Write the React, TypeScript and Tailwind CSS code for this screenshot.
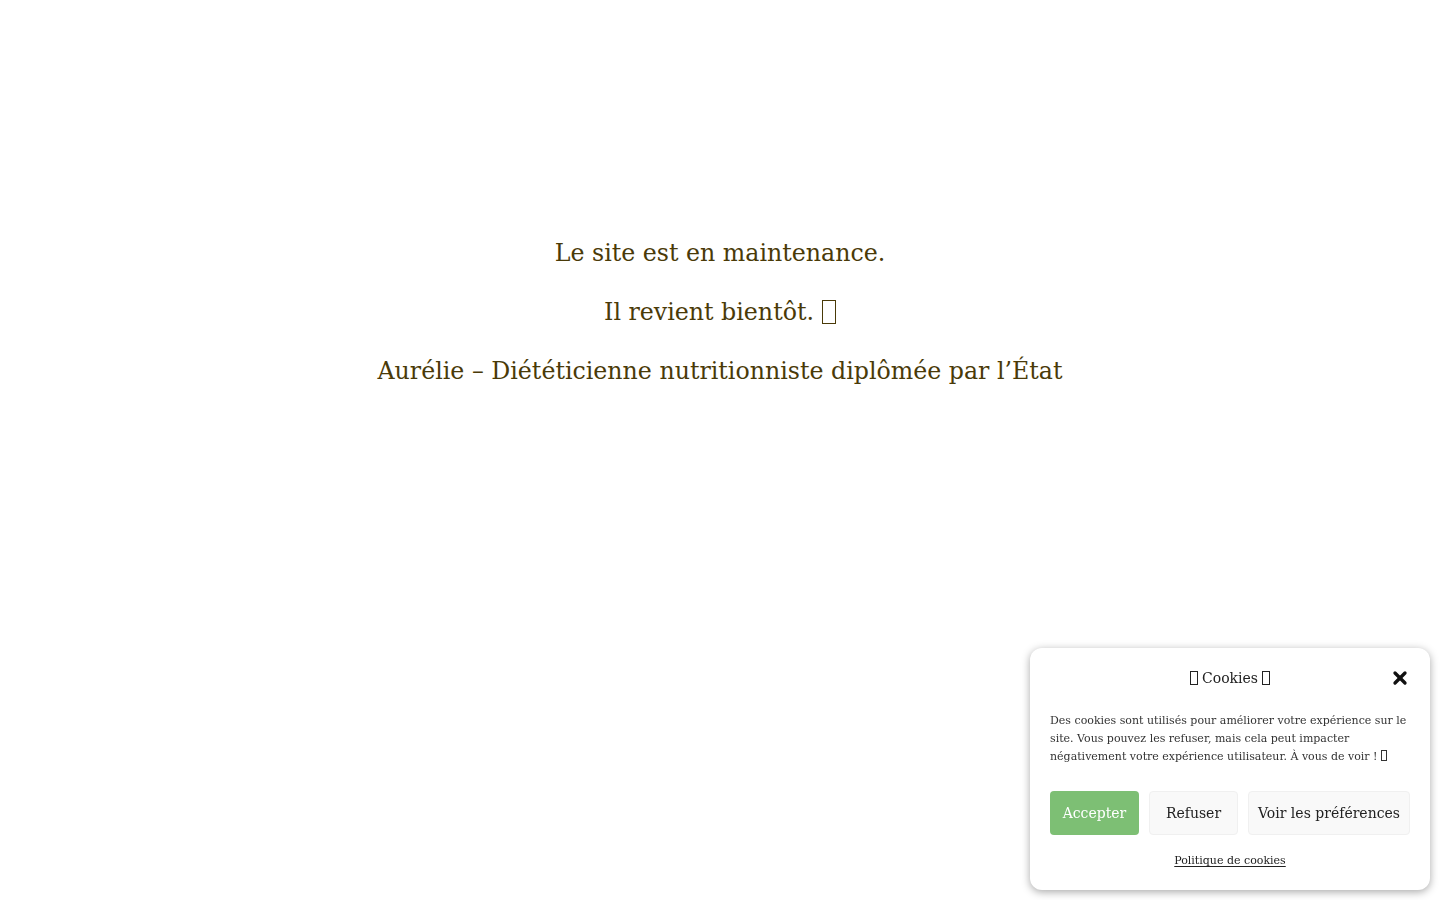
import { X } from "lucide-react";

const serif = { fontFamily: '"DejaVu Serif", "Liberation Serif", serif' };

// glyph box shown where the emoji has no font
function Tofu({ className }: { className: string }) {
  return <span className={`inline-block border border-current align-[-0.1em] ${className}`} />;
}

function CookieBanner() {
  return (
    <div
      className="fixed bottom-[10px] right-[10px] w-[400px] rounded-xl bg-white px-5 pb-[19px] pt-[18px] text-[#222] shadow-[0_2px_8px_rgba(0,0,0,0.35)]"
      style={serif}
    >
      <div className="relative flex h-[24px] items-center justify-center">
        <span className="flex items-center gap-[4px] text-[14px]">
          <Tofu className="h-[14px] w-[8px]" />
          Cookies
          <Tofu className="h-[14px] w-[8px]" />
        </span>
        <X size={20} strokeWidth={4} className="absolute right-[0px] top-[2px] text-[#111]" />
      </div>
      <p className="mt-[22px] text-[11px] leading-[18px] text-[#333]">
        Des cookies sont utilisés pour améliorer votre expérience sur le site. Vous pouvez les refuser, mais cela peut
        impacter négativement votre expérience utilisateur. À vous de voir !{" "}
        <Tofu className="h-[11px] w-[6px]" />
      </p>
      <div className="mt-[25px] flex gap-[10px]">
        <button type="button" className="h-[44px] w-[89px] rounded-[4px] bg-[#7dbf74] text-[14px] text-white">
          Accepter
        </button>
        <button
          type="button"
          className="h-[44px] w-[89px] rounded-[4px] border border-[#f0f0f0] bg-[#f9f9f9] text-[14px] text-[#222]"
        >
          Refuser
        </button>
        <button
          type="button"
          className="h-[44px] flex-1 rounded-[4px] border border-[#f0f0f0] bg-[#f9f9f9] text-[14px] text-[#222]"
        >
          Voir les préférences
        </button>
      </div>
      <div className="mt-[12px] text-center">
        <a className="text-[11px] text-[#222] underline underline-offset-2">Politique de cookies</a>
      </div>
    </div>
  );
}

export default function App() {
  return (
    <div className="min-h-[900px] bg-white" style={serif}>
      <main className="flex flex-col items-center pt-[234px] text-[23.7px] leading-[38px] text-[#4a3a08]">
        <p>Le site est en maintenance.</p>
        <p className="mt-[21px] flex items-center gap-[8px]">
          Il revient bientôt.
          <Tofu className="h-[24px] w-[14px]" />
        </p>
        <p className="mt-[21px]">Aurélie – Diététicienne nutritionniste diplômée par l’État</p>
      </main>
      <CookieBanner />
    </div>
  );
}
